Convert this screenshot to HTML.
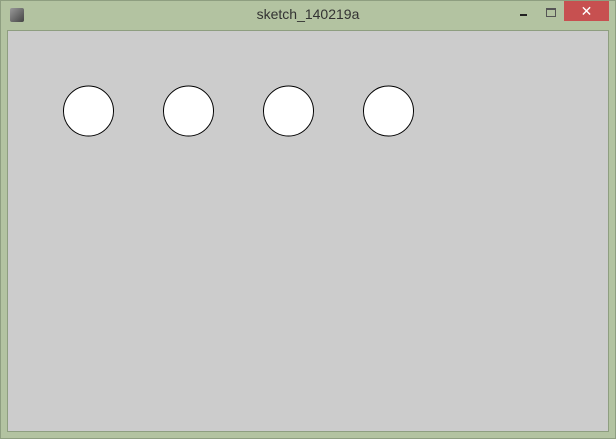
<!DOCTYPE html>
<html><head><style>
body{margin:0;width:616px;height:439px;background:#b3c3a1;position:relative;overflow:hidden;font-family:"Liberation Sans",sans-serif}
.outer{position:absolute;left:0;top:0;width:614px;height:437px;border:1px solid #8e9e80}
.content{position:absolute;left:7px;top:30px;width:600px;height:400px;background:#cccccc;border:1px solid #8e9e80}
.title{position:absolute;left:0;width:616px;top:6px;text-align:center;font-size:14px;color:#333}
.close{position:absolute;left:564px;top:1px;width:45px;height:20px;background:#c75050;color:#fff;text-align:center;font-size:14px;line-height:20px}
.icon{position:absolute;left:10px;top:8px;width:14px;height:14px;background:linear-gradient(135deg,#999,#444);border-radius:2px}
.min{position:absolute;left:520px;top:14px;width:7px;height:2px;background:#222}
.max{position:absolute;left:546px;top:8px;width:8px;height:6px;border:1px solid #555;border-top-width:2px}
</style></head><body>
<div class="outer"></div>
<div class="icon"></div>
<div class="title">sketch_140219a</div>
<div class="min"></div><div class="max"></div>
<div class="close">✕</div>
<div class="content"></div>
<svg style="position:absolute;left:0;top:0" width="616" height="439">
<g fill="#fff" stroke="#000" stroke-width="1">
<circle cx="88.5" cy="111" r="25"/><circle cx="188.5" cy="111" r="25"/><circle cx="288.5" cy="111" r="25"/><circle cx="388.5" cy="111" r="25"/>
</g></svg>
</body></html>
